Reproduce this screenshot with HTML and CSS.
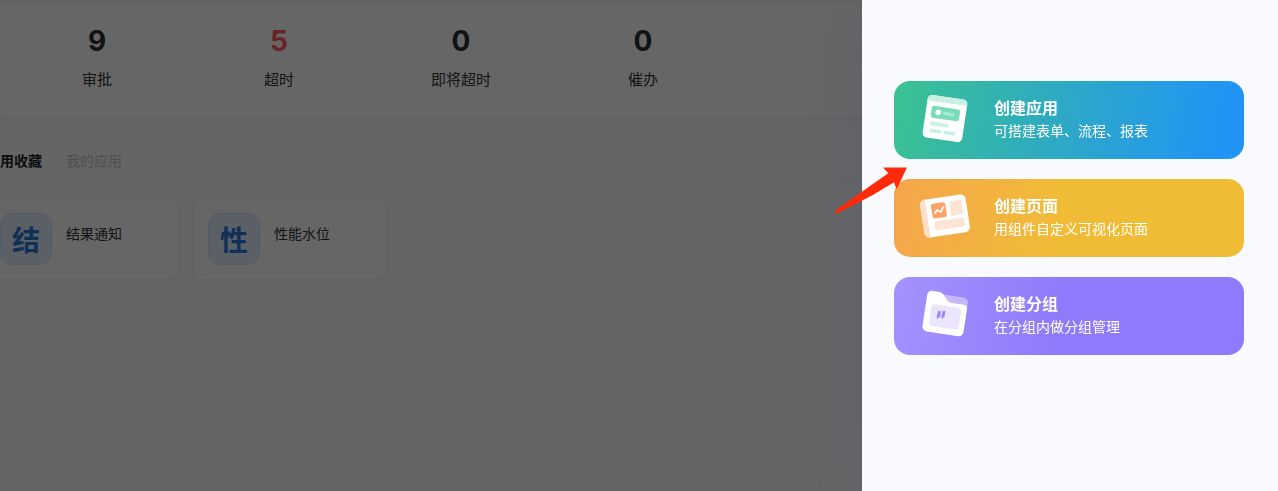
FILE: index.html
```html
<!DOCTYPE html>
<html lang="zh-CN">
<head>
<meta charset="utf-8">
<meta name="viewport" content="width=device-width, initial-scale=1">
<title>工作台</title>
<link rel="stylesheet" href="styles.css">
</head>
<body>
<main class="workbench">
  <section class="stats">
    <div class="stat"><strong class="stat-value">9</strong><span class="stat-label">审批</span></div>
    <div class="stat"><strong class="stat-value stat-value-alert">5</strong><span class="stat-label">超时</span></div>
    <div class="stat"><strong class="stat-value">0</strong><span class="stat-label">即将超时</span></div>
    <div class="stat"><strong class="stat-value">0</strong><span class="stat-label">催办</span></div>
  </section>
  <nav class="tabs">
    <button type="button" class="tab tab-active">用收藏</button>
    <button type="button" class="tab">我的应用</button>
  </nav>
  <section class="apps">
    <a class="app" href="#"><span class="app-icon">结</span><span class="app-name">结果通知</span></a>
    <a class="app" href="#"><span class="app-icon">性</span><span class="app-name">性能水位</span></a>
  </section>
</main>
<div class="mask"></div>
<aside class="drawer">
  <button type="button" class="create create-app">
    <svg class="create-icon" viewBox="0 0 52 52" aria-hidden="true">
      <g transform="rotate(8.5 26 26)">
        <rect x="6" y="5" width="40" height="43" rx="4.500" fill="#fff"/>
        <path d="M6 11V9.500A4.500 4.500 0 0 1 10.500 5h31A4.500 4.500 0 0 1 46 9.500V11z" fill="#c9f0e2"/>
        <rect x="11.500" y="15.500" width="28.500" height="12" rx="2" fill="#79dcbc"/>
        <circle cx="18.500" cy="21.500" r="2.800" fill="#fff"/>
        <rect x="23" y="20" width="12" height="3" rx="1.500" fill="#a7e9d3"/>
        <rect x="12" y="31.500" width="19" height="3.600" rx="1.500" fill="#c9f0e2"/>
        <rect x="12.500" y="38.500" width="12" height="3.600" rx="1.500" fill="#c9f0e2"/>
        <rect x="26.500" y="38.500" width="12" height="3.600" rx="1.500" fill="#c9f0e2"/>
      </g>
    </svg>
    <span class="create-text"><strong class="create-title">创建应用</strong><span class="create-desc">可搭建表单、流程、报表</span></span>
  </button>
  <button type="button" class="create create-page">
    <svg class="create-icon" viewBox="0 0 52 52" aria-hidden="true">
      <g transform="rotate(-8.500 26 26)">
        <rect x="3" y="7" width="46" height="38" rx="5" fill="#fff"/>
        <path d="M8.500 7H8a5 5 0 0 0-5 5v28a5 5 0 0 0 5 5h.5z" fill="#fddfca"/>
        <rect x="13.500" y="12" width="14.500" height="15" rx="2.500" fill="#fba367"/>
        <path d="M16.500 21.500l2.500-2.500 3.500 2.500 3-4.500" fill="none" stroke="#fff" stroke-width="1.800" stroke-linecap="round" stroke-linejoin="round"/>
        <rect x="32" y="12" width="12.500" height="15" rx="2.500" fill="#fde5d6"/>
        <rect x="14" y="30" width="30.500" height="9" rx="2.500" fill="#fde5d6"/>
      </g>
    </svg>
    <span class="create-text"><strong class="create-title">创建页面</strong><span class="create-desc">用组件自定义可视化页面</span></span>
  </button>
  <button type="button" class="create create-group">
    <svg class="create-icon" viewBox="0 0 52 52" aria-hidden="true">
      <g transform="rotate(8.500 26 26)">
        <path d="M20 7h22a5 5 0 0 1 5 5v7H24z" fill="#c6b8ff"/>
        <path d="M5.500 9.500A4.500 4.500 0 0 1 10 5h7.500a5 5 0 0 1 3.800 1.700l5 5.600a5 5 0 0 0 3.700 1.700h13a4 4 0 0 1 4 4V41a5 5 0 0 1-5 5H10.500a5 5 0 0 1-5-5z" fill="#fff"/>
        <rect x="11.500" y="18" width="30" height="22" rx="4" fill="#ebe5ff"/>
      </g>
      <path d="M19.200 23.200h2.500l-.8 5.300-2.500 2-.6-.8zM23.700 23.200h2.500l-.8 5.300-2.500 2-.6-.8z" fill="#9883f8" stroke="#9883f8" stroke-width=".4" stroke-linejoin="round"/>
    </svg>
    <span class="create-text"><strong class="create-title">创建分组</strong><span class="create-desc">在分组内做分组管理</span></span>
  </button>
</aside>
<svg class="pointer" viewBox="0 0 74 48" aria-hidden="true">
  <path d="M1.500 43.500L36 19 54.300 6.300 49 .5H73L62.700 22.300 60 15.300 39.300 27.700 3.500 46.200a1.600 1.600 0 0 1-2-2.700z" fill="#ff2a0a"/>
</svg>
</body>
</html>
```

FILE: styles.css
```css
* { box-sizing: border-box; }

body {
  margin: 0;
  min-height: 100vh;
  overflow: hidden;
  background: #fcfcff;
  font-family: Inter, "Noto Sans CJK SC", sans-serif;
  font-size: 14px;
  color: #333;
}

button {
  border: 0;
  padding: 0;
  background: none;
  font: inherit;
  color: inherit;
  cursor: pointer;
}

.stats {
  display: grid;
  grid-template-columns: repeat(4, 182px);
  padding: 23px 0 27px 6px;
  background: #fff;
  border-top: 2px solid #f8f8fa;
  box-shadow: inset 0 1px #eeeef2, 0 1px 4px #e8e8f0;
}

.stat {
  display: flex;
  flex-direction: column;
  align-items: center;
  gap: 11px;
}

.stat-value {
  font-size: 28px;
  line-height: 32px;
  font-weight: 700;
  color: #2b2f33;
}

.stat-value-alert { color: #ff5a67; }

.stat-label {
  font-size: 15px;
  line-height: 23px;
}

.tabs {
  display: flex;
  gap: 24px;
  padding: 20px 0 1px;
  border-bottom: 1px solid #ededf2;
}

.tab {
  height: 43px;
  color: #c6c6c6;
}

.tab-active {
  font-weight: 700;
  color: #222;
}

.apps {
  display: flex;
  gap: 16px;
  margin: 16px 0 0 -14px;
}

.app {
  display: flex;
  gap: 14px;
  width: 192px;
  padding: 14px;
  border-radius: 8px;
  background: #fff;
  box-shadow: 0 2px 8px #eeeef4;
  color: #333;
  text-decoration: none;
}

.app-icon {
  display: flex;
  align-items: center;
  justify-content: center;
  width: 52px;
  height: 52px;
  border: 1px solid #d0e5fb;
  border-radius: 12px;
  background: #e3f0ff;
  font-size: 28px;
  font-weight: 700;
  color: #2878d8;
}

.app-name { line-height: 42px; }

.mask {
  position: fixed;
  inset: 0;
  background: rgba(0, 0, 0, 0.6);
}

.drawer {
  position: fixed;
  top: 0;
  right: 0;
  bottom: 0;
  width: 416px;
  display: flex;
  flex-direction: column;
  gap: 20px;
  padding: 81px 34px 0 32px;
  background: #f9fafd;
  box-shadow: -2px 0 56px rgba(85, 88, 110, 0.4);
}

.create {
  display: flex;
  align-items: center;
  gap: 23px;
  height: 78px;
  padding: 0 25px;
  border-radius: 16px;
  color: #fff;
  text-align: left;
}

.create-app { background: linear-gradient(100deg, #3bc291, #2fabc0 43%, #2194f6 94%); }
.create-page { background: linear-gradient(100deg, #f5a54c, #f0bc36 48%); }
.create-group { background: linear-gradient(100deg, #a592ff, #8f7afb 48%); }

.create-icon {
  width: 52px;
  height: 52px;
  margin-bottom: 4px;
}

.create-text {
  display: flex;
  flex-direction: column;
}

.create-title {
  font-size: 16px;
  line-height: 22px;
  font-weight: 700;
}

.create-desc {
  font-size: 14px;
  line-height: 24px;
}

.pointer {
  position: fixed;
  top: 167px;
  right: 370px;
  width: 74px;
  height: 48px;
}
```
